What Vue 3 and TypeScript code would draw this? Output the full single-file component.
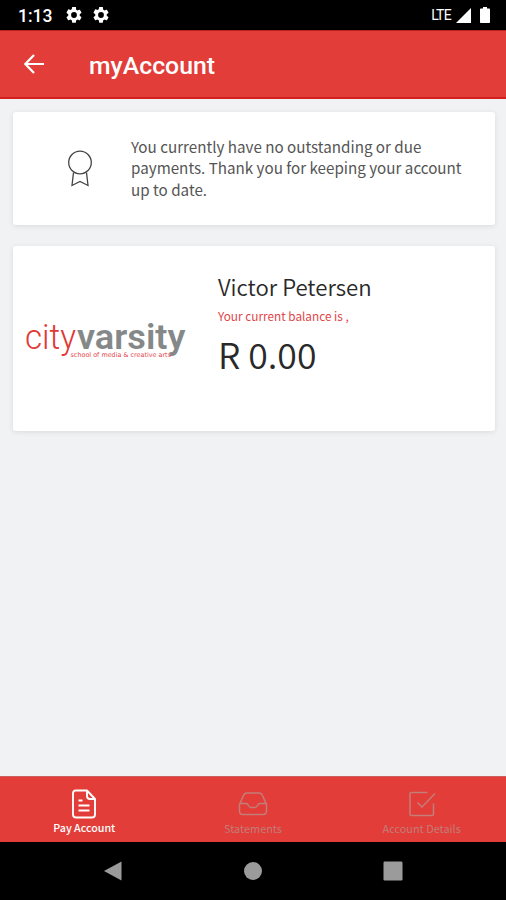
<script setup lang="ts">
import { ref } from 'vue'

type TabId = 'pay' | 'statements' | 'details'

const tabs: { id: TabId; label: string }[] = [
  { id: 'pay', label: 'Pay Account' },
  { id: 'statements', label: 'Statements' },
  { id: 'details', label: 'Account Details' },
]
const active = ref<TabId>('pay')
const gear =
  'M19.14 12.94c.04-.3.06-.61.06-.94s-.02-.64-.07-.94l2.03-1.58a.5.5 0 0 0 .12-.61l-1.92-3.32a.5.5 0 0 0-.59-.22l-2.39.96a7 7 0 0 0-1.62-.94l-.36-2.54A.5.5 0 0 0 13.92 2h-3.84a.5.5 0 0 0-.48.41l-.36 2.54a7 7 0 0 0-1.62.94l-2.39-.96a.5.5 0 0 0-.59.22L2.72 8.87a.5.5 0 0 0 .12.61l2.03 1.58a7 7 0 0 0 0 1.88l-2.03 1.58a.5.5 0 0 0-.12.61l1.92 3.32c.12.22.37.29.59.22l2.39-.96c.5.38 1.03.7 1.62.94l.36 2.54c.05.24.24.41.48.41h3.84c.24 0 .44-.17.47-.41l.36-2.54a7 7 0 0 0 1.62-.94l2.39.96c.22.08.47 0 .59-.22l1.92-3.32a.5.5 0 0 0-.12-.61zM12 15.6a3.6 3.6 0 1 1 0-7.2 3.6 3.6 0 0 1 0 7.2z'
</script>

<template>
  <div class="screen">
    <div class="status">
      <span class="clock">1:13</span>
      <svg v-for="n in 2" :key="n" class="gear" viewBox="2 2 20 20"><path :d="gear" /></svg>
      <span class="lte">LTE</span>
      <svg class="signal" viewBox="0 0 15 15"><path d="M15 0V15H0z" /></svg>
      <svg class="battery" viewBox="0 0 10 16"><path d="M3 0h4v1.6h2.2q.8 0 .8.8v12.8q0 .8-.8.8H.8q-.8 0-.8-.8V2.400q0-.8.8-.8H3z" /></svg>
    </div>

    <header class="header">
      <svg class="back" viewBox="0 0 20 20"><path d="M20 10H1.600M10 1L1.400 10l8.600 9" /></svg>
      <h1>myAccount</h1>
    </header>

    <main class="content">
      <section class="card notice">
        <svg class="award" viewBox="0 0 26 38">
          <circle cx="13" cy="12.500" r="11.300" />
          <path d="M6.500 22.500L5 35.500l8-4 8 4-1.500-13" />
        </svg>
        <p>You currently have no outstanding or due<br />payments. Thank you for keeping your account<br />up to date.</p>
      </section>

      <section class="card account">
        <svg class="logo" viewBox="0 0 162 42" role="img" aria-label="cityvarsity">
          <text class="city" x="0" y="30.500" textLength="51" lengthAdjust="spacingAndGlyphs">city</text>
          <text class="varsity" x="52" y="30.500" textLength="108.500" lengthAdjust="spacingAndGlyphs">varsity</text>
          <text class="motto" x="45.500" y="38.500" textLength="100.500" lengthAdjust="spacingAndGlyphs">school of media &amp; creative arts</text>
        </svg>
        <div class="details">
          <div class="name">Victor Petersen</div>
          <div class="label">Your current balance is ,</div>
          <div class="amount">R 0.00</div>
        </div>
      </section>
    </main>

    <nav class="tabs">
      <button v-for="tab in tabs" :key="tab.id" :class="['tab', tab.id, { active: active === tab.id }]" @click="active = tab.id">
        <svg viewBox="0 0 30 30">
          <template v-if="tab.id === 'pay'">
            <path d="M6.500 1.500h11.500l8 8.500v15.500q0 3-3 3H7q-3 0-3-3v-21q0-3 2.500-3z" />
            <path d="M18 1.500v5.500q0 3 3 3h5M9.500 11.500h4M9.500 16.500h11M9.500 21.500h11" />
          </template>
          <template v-else-if="tab.id === 'statements'">
            <path d="M1.500 15.500L5.500 6.500q1-2.500 3.500-2.500h12q2.500 0 3.500 2.500l4 9v6.500q0 3.500-3.500 3.500H5q-3.500 0-3.500-3.500zM1.500 14.500h6.500q1.500 0 2.500 2t3 2h3q2 0 3-2t2.500-2h6.500" />
          </template>
          <template v-else>
            <path d="M20.500 3.500H4.500q-1.500 0-1.500 1.500v20q0 1.500 1.500 1.500h20.500q1.500 0 1.500-1.500V14.500M10.500 13.500l4.500 4.500L28 4.500" />
          </template>
        </svg>
        <span>{{ tab.label }}</span>
      </button>
    </nav>

    <div class="system">
      <svg viewBox="0 0 20 20"><path d="M18.500.500v19L1 10z" /></svg>
      <svg viewBox="0 0 20 20"><circle cx="10" cy="10" r="9" /></svg>
      <svg viewBox="0 0 20 20"><rect x=".5" y=".5" width="19" height="19" rx="1.200" /></svg>
    </div>
  </div>
</template>

<style>
body {
  margin: 0;
  background: #000;
}
</style>

<style scoped>
.screen {
  width: 506px;
  height: 900px;
  display: flex;
  flex-direction: column;
  overflow: hidden;
  background: #f0f2f4;
  font-family: 'Noto Sans CJK SC', 'Open Sans', sans-serif;
}
.status {
  height: 30px;
  flex: none;
  box-sizing: border-box;
  padding: 0 16px 0 18px;
  display: flex;
  align-items: center;
  background: #000;
  color: #fff;
  fill: #fff;
  font-family: Roboto, sans-serif;
}
.clock {
  width: 48px;
  font-size: 17.500px;
  font-weight: 500;
  line-height: 30px;
  padding-top: 2px;
}
.gear {
  width: 16px;
  height: 16px;
  margin-right: 11px;
}
.lte {
  margin-left: auto;
  font-size: 14px;
  letter-spacing: -0.700px;
}
.signal {
  width: 15px;
  height: 15px;
  margin-left: 5px;
}
.battery {
  width: 10px;
  height: 16px;
  margin-left: 9px;
}
.header {
  height: 69px;
  flex: none;
  box-sizing: border-box;
  display: flex;
  align-items: center;
  padding: 0 24px 0 24px;
  background: #e23d39;
  border-top: 1px solid #b8201c;
  border-bottom: 2px solid #d31f1d;
  color: #fff;
}
.back {
  width: 20px;
  height: 20px;
  fill: none;
  stroke: #fff;
  stroke-width: 2.200;
}
.header h1 {
  margin: 3px 0 0 45px;
  font: 500 24.800px/32px Roboto, sans-serif;
}
.content {
  flex: 1;
  padding: 13px 11px 0 13px;
}
.card {
  box-sizing: border-box;
  background: #fff;
  border-radius: 3px;
  box-shadow: 0 1px 5px rgba(60, 65, 75, 0.13);
}
.notice {
  height: 113px;
  display: flex;
  align-items: center;
  padding-left: 54px;
}
.award {
  width: 26px;
  height: 38px;
  fill: none;
  stroke: #444;
  stroke-width: 1.300;
}
.notice p {
  margin: 0 0 1px 38px;
  font-size: 15.200px;
  line-height: 21.500px;
  color: #555;
  white-space: nowrap;
}
.account {
  height: 185px;
  margin-top: 21px;
  display: flex;
  align-items: center;
  padding-left: 12px;
}
.logo {
  width: 162px;
  height: 42px;
  overflow: visible;
  font-family: Roboto, sans-serif;
}
.city {
  font-size: 35.500px;
  font-weight: 300;
  fill: #df3935;
}
.varsity {
  font-size: 35.500px;
  font-weight: 600;
  fill: #858889;
}
.motto {
  font-family: 'DejaVu Sans', sans-serif;
  font-size: 6.500px;
  fill: #e5484d;
}
.details {
  align-self: flex-start;
  padding: 24px 0 0 31px;
  white-space: nowrap;
}
.name {
  font-size: 22.200px;
  line-height: 32px;
  font-weight: 350;
  color: #292929;
}
.label {
  margin-top: 4px;
  font-size: 11.800px;
  line-height: 20px;
  color: #df4547;
}
.amount {
  margin-top: 5px;
  font-size: 35.600px;
  line-height: 46px;
  font-weight: 350;
  color: #292929;
}
.tabs {
  height: 66px;
  flex: none;
  box-sizing: border-box;
  display: grid;
  grid-template-columns: repeat(3, 1fr);
  background: #e23d39;
  border-top: 1px solid #c9605e;
}
.tab {
  display: flex;
  flex-direction: column;
  align-items: center;
  padding: 12px 0 0;
  border: 0;
  background: none;
  font: 400 10.900px/18px 'Noto Sans CJK SC', sans-serif;
  color: #c47c78;
}
.tab svg {
  width: 30px;
  height: 30px;
  fill: none;
  stroke: currentColor;
  stroke-width: 1.500;
}
.tab.active {
  color: #fff;
  font-size: 10.700px;
  font-weight: 500;
}
.tab.active svg {
  stroke-width: 1.900;
}
.system {
  height: 58px;
  flex: none;
  display: flex;
  justify-content: center;
  align-items: center;
  gap: 120px;
  background: #000;
  fill: #9b9b9b;
}
.system svg {
  width: 20px;
  height: 20px;
}
</style>
